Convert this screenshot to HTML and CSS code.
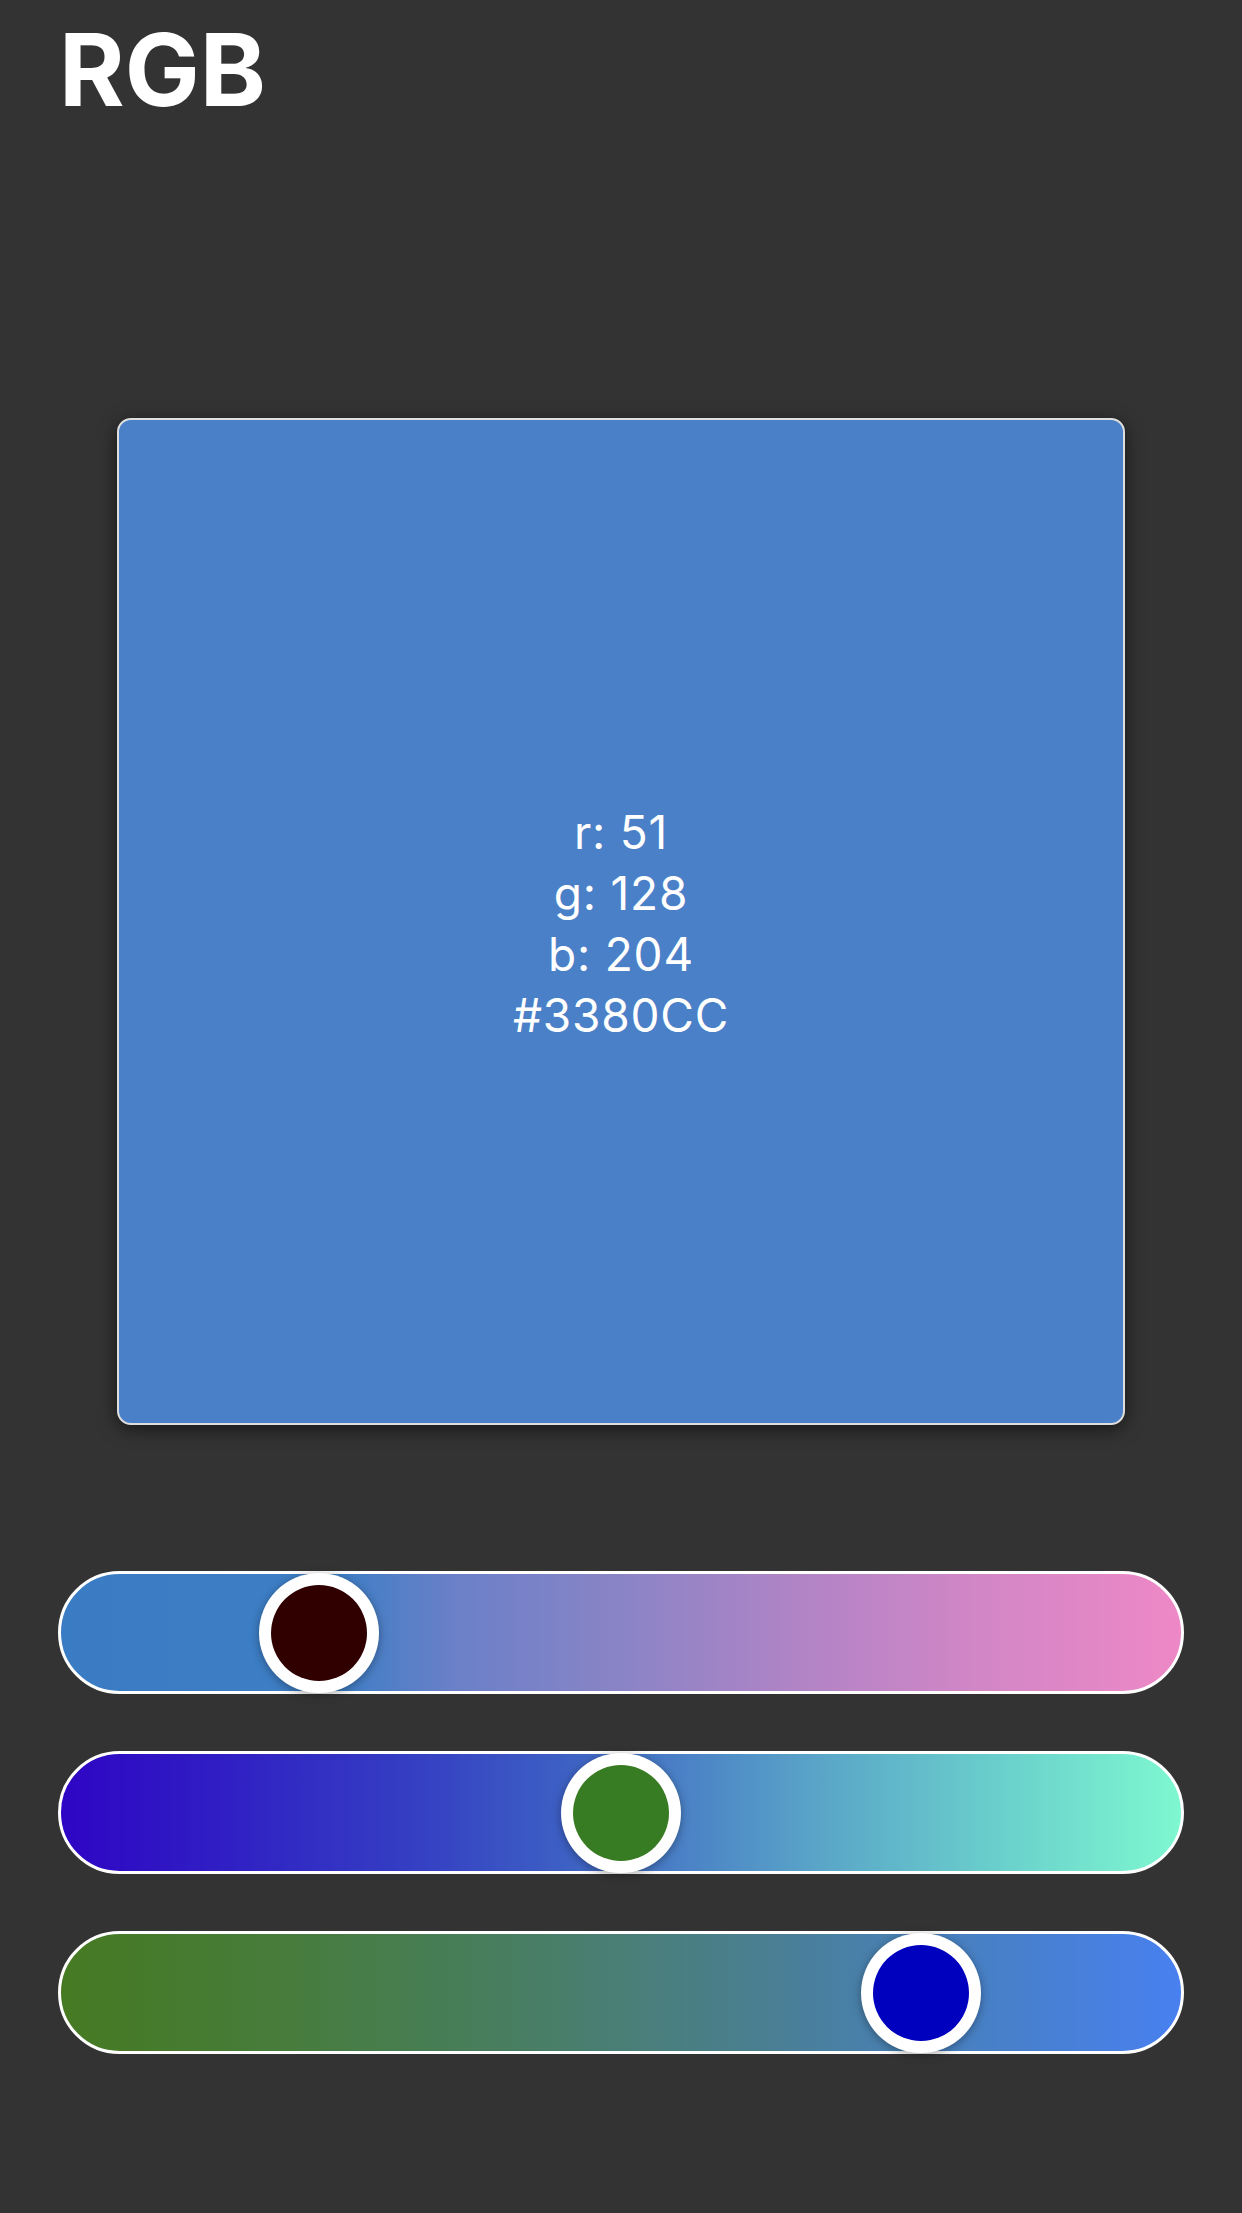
FILE: index.html
```html
<!DOCTYPE html>
<html lang="en">
<head>
<meta charset="utf-8">
<title>RGB</title>
<link rel="stylesheet" href="styles.css">
</head>
<body>
<main class="app">
  <h1 class="title">RGB</h1>
  <section class="swatch">
    <div class="swatch-text">
      <div>r: 51</div>
      <div>g: 128</div>
      <div>b: 204</div>
      <div>#3380CC</div>
    </div>
  </section>
  <section class="sliders">
    <div class="track track-r">
      <div class="thumb" style="left: 198px"><span class="dot dot-r"></span></div>
    </div>
    <div class="track track-g">
      <div class="thumb" style="left: 500px"><span class="dot dot-g"></span></div>
    </div>
    <div class="track track-b">
      <div class="thumb" style="left: 800px"><span class="dot dot-b"></span></div>
    </div>
  </section>
</main>
</body>
</html>
```
FILE: styles.css
```css
html, body {
  margin: 0;
  padding: 0;
  background: #333333;
}
body {
  font-family: Inter, "Noto Sans", "Liberation Sans", sans-serif;
  color: #fff;
  width: 1242px;
  height: 2213px;
  overflow: hidden;
}
.app {
  display: flex;
  flex-direction: column;
}
.title {
  margin: 10px 0 0 0;
  padding-left: 59px;
  font-size: 100px;
  line-height: 120px;
  font-weight: 700;
  letter-spacing: 0;
}
.swatch {
  box-sizing: border-box;
  align-self: center;
  margin-top: 288px;
  width: 1008px;
  height: 1007px;
  background: #4a80c7;
  border: 2.5px solid #dedede;
  border-radius: 14px;
  box-shadow: 0 4px 18px rgba(0, 0, 0, 0.55);
  display: flex;
  align-items: center;
  justify-content: center;
}
.swatch-text {
  text-align: center;
  font-size: 46px;
  line-height: 61px;
  font-weight: 400;
  letter-spacing: 0.8px;
  margin-top: 4px;
}
.sliders {
  margin-top: 146px;
  align-self: center;
  width: 1126px;
  display: flex;
  flex-direction: column;
  gap: 57px;
}
.track {
  box-sizing: border-box;
  position: relative;
  height: 123px;
  border: 3px solid #ffffff;
  border-radius: 62px;
}
.track-r {
  background: linear-gradient(to right, #3a7cc4 0%, #3e7ec5 25%, #6a80c8 35%, #8a84c6 50%, #b184c6 66%, #d286c6 82%, #ee88c6 100%);
}
.track-g {
  background: linear-gradient(to right, #2e05c4 0%, #3020c4 15%, #3540c3 32%, #3d60c4 45%, #4a80c6 55%, #5aa6c8 68%, #6ad0cc 84%, #7ef8d0 100%);
}
.track-b {
  background: linear-gradient(to right, #467a22 0%, #477c3c 20%, #487e60 40%, #4a7f90 62%, #4880c0 80%, #4880f0 100%);
}
.thumb {
  position: absolute;
  top: -1px;
  box-sizing: border-box;
  width: 120px;
  height: 120px;
  border-radius: 50%;
  background: #ffffff;
  box-shadow: 0 2px 10px rgba(0, 0, 0, 0.35);
  display: flex;
  align-items: center;
  justify-content: center;
}
.dot {
  width: 96px;
  height: 96px;
  border-radius: 50%;
}
.dot-r { background: #300000; }
.dot-g { background: #377b22; }
.dot-b { background: #0000bf; }
```
